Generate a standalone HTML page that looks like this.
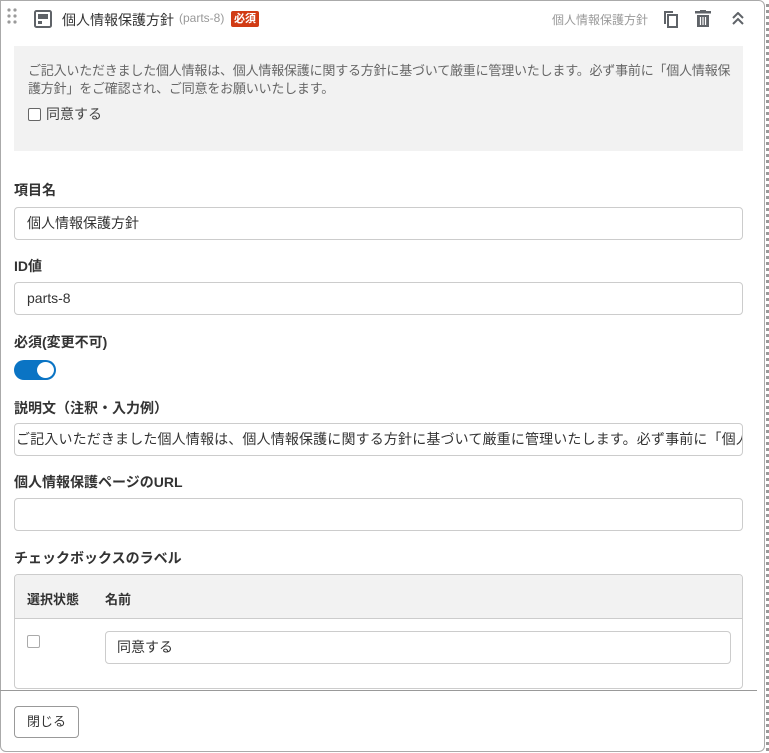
<!DOCTYPE html>
<html><head><meta charset="utf-8"><style>
*{box-sizing:border-box;margin:0;padding:0}
body{width:769px;height:753px;background:#fff;font-family:"Liberation Sans","Noto Sans CJK JP",sans-serif;font-size:14px;color:#333;position:relative;overflow:hidden}
.panel{position:absolute;left:0;top:0;width:765px;height:752px;border:1px solid #aaa;border-radius:0 6px 6px 6px}
.dots{position:absolute;right:0;top:4px;bottom:2px;width:3px;border-right:3px dotted #999}
.abs{position:absolute}
.lbl{position:absolute;left:14px;font-weight:bold;font-size:14px;color:#333}
.inp{position:absolute;left:14px;width:729px;height:33px;border:1px solid #ccc;border-radius:4px;padding:0 12px;line-height:31px;font-size:14px;color:#333;white-space:nowrap;overflow:hidden}
</style></head><body>
<div class="panel"></div>
<div class="dots"></div>
<svg class="abs" style="left:7px;top:8px" width="12" height="20"><g fill="#9a9a9a"><circle cx="2" cy="2" r="1.6"/><circle cx="8" cy="2" r="1.6"/><circle cx="2" cy="8" r="1.6"/><circle cx="8" cy="8" r="1.6"/><circle cx="2" cy="14" r="1.6"/><circle cx="8" cy="14" r="1.6"/></g></svg>
<svg class="abs" style="left:34px;top:10px" width="18" height="18"><rect x="1" y="1" width="16" height="16" rx="1.5" fill="none" stroke="#5f6368" stroke-width="2"/><rect x="4" y="4" width="10" height="5" fill="#5f6368"/><rect x="4" y="11" width="4" height="3" fill="#5f6368"/></svg>
<div class="abs" style="left:62px;top:10px;font-size:14px;color:#333">個人情報保護方針</div>
<div class="abs" style="left:179px;top:11px;font-size:12px;color:#999">(parts-8)</div>
<div class="abs" style="left:231px;top:11px;font-size:11px;color:#fff;background:#d13b14;padding:1px 3px;border-radius:2px;line-height:14px;font-weight:bold">必須</div>
<div class="abs" style="left:552px;top:11px;font-size:12px;color:#999">個人情報保護方針</div>
<svg class="abs" style="left:661px;top:10px" width="18" height="19"><path d="M4 1H12v2H5V14H3V1z" fill="#5f6368"/><rect x="7" y="5" width="9" height="12" fill="none" stroke="#5f6368" stroke-width="2"/></svg>
<svg class="abs" style="left:695px;top:10px" width="16" height="18"><rect x="0" y="1" width="16" height="2.5" fill="#5f6368"/><rect x="5" y="0" width="6" height="2" fill="#5f6368"/><path d="M2 5H14V17H2z" fill="#5f6368"/><path d="M5.5 7v8M8 7v8M10.5 7v8" stroke="#fff" stroke-width="1.2"/></svg>
<svg class="abs" style="left:732px;top:12px" width="12" height="14"><path d="M1 6L6 1 11 6M1 12L6 7 11 12" fill="none" stroke="#5f6368" stroke-width="2"/></svg>
<div class="abs" style="left:14px;top:46px;width:729px;height:105px;background:#f2f2f2"></div>
<div class="abs" style="left:28px;top:62px;width:740px;font-size:13px;line-height:18px;color:#666;white-space:nowrap;letter-spacing:-0.2px">ご記入いただきました個人情報は、個人情報保護に関する方針に基づいて厳重に管理いたします。必ず事前に「個人情報保<br>護方針」をご確認され、ご同意をお願いいたします。</div>
<div class="abs" style="left:28px;top:108px;width:13px;height:13px;border:1px solid #666;border-radius:2px;background:#fff"></div>
<div class="abs" style="left:46px;top:104px;font-size:14px;color:#444">同意する</div>
<div class="lbl" style="top:180px">項目名</div>
<div class="inp" style="top:207px">個人情報保護方針</div>
<div class="lbl" style="top:256px">ID値</div>
<div class="inp" style="top:282px">parts-8</div>
<div class="lbl" style="top:332px">必須(変更不可)</div>
<div class="abs" style="left:14px;top:360px;width:42px;height:20px;border-radius:10px;background:#0a74c4"></div>
<div class="abs" style="left:37px;top:362px;width:17px;height:16px;border-radius:50%;background:#fff"></div>
<div class="lbl" style="top:398px">説明文（注釈・入力例）</div>
<div class="inp" style="top:423px;padding:0 0 0 1px;letter-spacing:0.15px">ご記入いただきました個人情報は、個人情報保護に関する方針に基づいて厳重に管理いたします。必ず事前に「個人情報保護方針」</div>
<div class="lbl" style="top:472px">個人情報保護ページのURL</div>
<div class="inp" style="top:498px"></div>
<div class="lbl" style="top:548px">チェックボックスのラベル</div>
<div class="abs" style="left:14px;top:574px;width:729px;height:115px;border:1px solid #ccc;border-radius:4px;overflow:hidden">
 <div style="height:44px;background:#f2f2f2;border-bottom:1px solid #ccc;position:relative">
  <div class="abs" style="left:12px;top:14px;font-weight:bold;font-size:13px">選択状態</div>
  <div class="abs" style="left:90px;top:14px;font-weight:bold;font-size:13px">名前</div>
 </div>
 <div class="abs" style="left:12px;top:60px;width:13px;height:13px;border:1px solid #aaa;border-radius:2px"></div>
 <div class="abs" style="left:90px;top:56px;width:626px;height:33px;border:1px solid #ccc;border-radius:4px;padding:0 11px;line-height:31px">同意する</div>
</div>
<div class="abs" style="left:0;top:690px;width:757px;height:1px;background:#999"></div>
<div class="abs" style="left:14px;top:706px;width:65px;height:32px;border:1px solid #999;border-radius:4px;line-height:30px;text-align:center;font-size:13px">閉じる</div>
</body></html>
